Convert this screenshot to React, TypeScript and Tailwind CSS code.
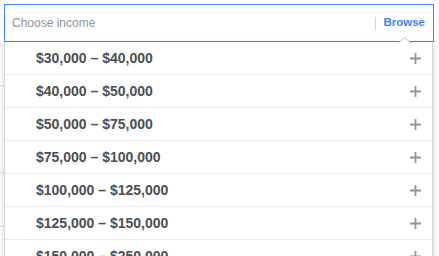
import React from "react";

const ranges = [
  "$30,000 – $40,000",
  "$40,000 – $50,000",
  "$50,000 – $75,000",
  "$75,000 – $100,000",
  "$100,000 – $125,000",
  "$125,000 – $150,000",
  "$150,000 – $250,000",
];

function Plus() {
  return (
    <svg width="11" height="11" viewBox="0 0 11 11" className="shrink-0">
      <path d="M5.5 0 V11 M0 5.5 H11" stroke="#90949c" strokeWidth="1.8" />
    </svg>
  );
}

export default function App() {
  return (
    <div
      className="relative w-[439px] h-[256px] bg-white overflow-hidden"
      style={{ fontFamily: '"Liberation Sans", Arial, sans-serif' }}
    >
      {/* background content peeking at left edge */}
      <div className="absolute left-0 top-0 w-[5px] h-[256px] flex flex-col">
        <div className="h-[50px]" />
        <div className="ml-[4px] w-[1px] h-[25px] bg-[#8d949e]" />
        <div className="h-[10px]" />
        <div className="w-[5px] h-[1px] bg-[#dddfe2]" />
        <div className="h-[86px]" />
        <div className="w-[5px] h-[1px] bg-[#dddfe2]" />
        <div className="h-[7px]" />
        <div className="ml-[4px] w-[1px] h-[37px] bg-[#8b9dc3]" />
        <div className="h-[9px]" />
        <div className="w-[5px] h-[1px] bg-[#dddfe2]" />
        <div className="h-[8px]" />
        <div className="ml-[4px] w-[1px] h-[21px] bg-[#8b9dc3]" />
      </div>

      {/* input */}
      <div className="relative ml-[4px] mt-[4px] w-[430px] h-[38px] border border-[#4080ff] bg-white flex items-center pl-[7px] pr-[8px]">
        <span className="text-[12px] text-[#90949c] flex-1">Choose income</span>
        <div className="w-[1px] h-[13px] bg-[#c4d2e7] mr-[7px]" />
        <span className="text-[11.5px] font-bold text-[#4080ff]">Browse</span>
      </div>

      {/* dropdown */}
      <div className="absolute left-[4px] top-[42px] w-[429px] bg-white border-x border-[#d3d6db] shadow-[0_2px_6px_rgba(0,0,0,0.2)]">
        <svg
          width="13"
          height="6"
          viewBox="0 0 13 6"
          className="absolute -top-[5px] left-[393px]"
        >
          <path d="M0 6 L6.5 0.5 L13 6" fill="white" stroke="#a9c0ec" strokeWidth="1" />
        </svg>
        {ranges.map((r) => (
          <div
            key={r}
            className="h-[33px] border-b border-[#e9ebee] flex items-center pl-[31px] pr-[11px]"
          >
            <span className="flex-1 text-[14px] font-bold text-[#4b4f56]">{r}</span>
            <Plus />
          </div>
        ))}
      </div>
    </div>
  );
}
